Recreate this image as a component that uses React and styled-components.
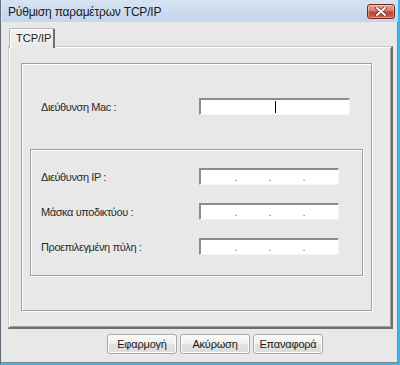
import styled, { createGlobalStyle } from 'styled-components'

const GlobalStyle = createGlobalStyle`
	html, body {
		margin: 0;
		padding: 0;
		background: #fff;
	}
	body {
		font-family: "Liberation Sans", Arial, sans-serif;
		font-size: 11px;
		color: #000;
	}
`

const Window = styled.div`
	box-sizing: border-box;
	width: 400px;
	height: 365px;
	display: flex;
	flex-direction: column;
	border-left: 1px solid #5f6b78;
	border-right: 2px solid #3cb4ee;
	border-bottom: 2px solid #3cb4ee;
	background: #c9d9ec;
`

const TitleBar = styled.div`
	height: 22px;
	flex: none;
	display: flex;
	align-items: center;
	justify-content: space-between;
	padding: 0 3px 0 6px;
	background: linear-gradient(#d6e3f2, #c3d5ea);
	border-left: 1px solid #e4edf7;
`

const Title = styled.span`
	font-size: 12px;
	letter-spacing: -0.2px;
	color: #1a1a1a;
	padding-top: 1px;
`

const CloseButton = styled.div`
	box-sizing: border-box;
	width: 28px;
	height: 15px;
	margin-top: 1px;
	display: flex;
	align-items: center;
	justify-content: center;
	border: 1px solid #6e2a24;
	border-radius: 3px;
	background: linear-gradient(#e8a496 0%, #d7796a 45%, #c2432f 55%, #d0634a 100%);
	box-shadow: inset 0 0 0 1px rgba(255, 255, 255, 0.35);
`

const Client = styled.div`
	flex: 1;
	display: flex;
	flex-direction: column;
	background: #e8e8e8;
	border-right: 1px solid #7d8894;
	border-bottom: 1px solid #7d8894;
	padding: 6px 0 0 7px;
`

const TabStrip = styled.div`
	display: flex;
	height: 18px;
	position: relative;
	z-index: 1;
`

const Tab = styled.div`
	box-sizing: border-box;
	width: 46px;
	height: 20px;
	margin-left: 1px;
	padding: 3px 0 0 6px;
	background: linear-gradient(#f4f4f4, #e8e8e8);
	border: 1px solid #b4b4b4;
	border-bottom: none;
	border-right: 2px solid #6e6e6e;
	border-radius: 2px 2px 0 0;
	box-shadow: inset 1px 1px 0 #fff;
	font-size: 11px;
	color: #1e1e1e;
`

const TabPanel = styled.div`
	box-sizing: border-box;
	width: 385px;
	height: 283px;
	padding: 16px 0 0 12px;
	border-style: solid;
	border-width: 1px 2px 2px 1px;
	border-color: #c8c8c8 #6e6e6e #6e6e6e #c8c8c8;
	box-shadow: inset 1px 1px 0 #fff, inset -1px -1px 0 #a0a0a0;
`

const GroupBox = styled.div`
	box-sizing: border-box;
	width: ${p => p.$w}px;
	height: ${p => p.$h}px;
	margin: ${p => p.$m || 0};
	border: 1px solid #a0a0a0;
	box-shadow: inset 1px 1px 0 #fff, 1px 1px 0 #fff;
	padding-top: ${p => p.$pt || 0}px;
	display: flex;
	flex-direction: column;
	gap: ${p => p.$gap || 0}px;
`

const Row = styled.div`
	display: flex;
	align-items: center;
	height: 17px;
	padding-left: ${p => p.$pl}px;
`

const Label = styled.span`
	width: 158px;
	flex: none;
	color: #2a2a2a;
	letter-spacing: -0.4px;
`

const Field = styled.div`
	box-sizing: border-box;
	width: ${p => p.$w}px;
	height: 17px;
	display: flex;
	align-items: center;
	background: #fff;
	border: 1px solid;
	border-color: #8c8c8c #f4f4f4 #f4f4f4 #8c8c8c;
	box-shadow: inset 1px 1px 0 #8c8c8c;
	padding-left: ${p => p.$pl || 0}px;
`

const Caret = styled.span`
	width: 1px;
	height: 12px;
	background: #000;
	margin-left: 75px;
`

const Segment = styled.span`
	width: 30px;
	flex: none;
`

const Dot = styled.span`
	width: 4px;
	flex: none;
	text-align: center;
	color: #7a6a86;
	font-size: 11px;
	line-height: 11px;
	padding-top: 2px;
`

const ButtonRow = styled.div`
	display: flex;
	gap: 3px;
	margin: 5px 0 0 99px;
`

const Button = styled.div`
	box-sizing: border-box;
	width: 70px;
	height: 20px;
	display: flex;
	align-items: center;
	justify-content: center;
	border: 1px solid #a9a9a9;
	border-radius: 3px;
	background: linear-gradient(#fafafa 0%, #efefef 50%, #e2e2e2 51%, #dcdcdc 100%);
	box-shadow: inset 0 0 0 1px #fbfbfb;
	color: #1a1a1a;
	font-size: 11px;
	letter-spacing: -0.2px;
`

const IpField = () => (
	<Field $w={140} $pl={4}>
		<Segment />
		<Dot>.</Dot>
		<Segment />
		<Dot>.</Dot>
		<Segment />
		<Dot>.</Dot>
	</Field>
)

const ipRows = ['Διεύθυνση IP :', 'Μάσκα υποδικτύου :', 'Προεπιλεγμένη πύλη :']

export default function App() {
	return (
		<>
			<GlobalStyle />
			<Window>
				<TitleBar>
					<Title>Ρύθμιση παραμέτρων TCP/IP</Title>
					<CloseButton>
						<svg width="12" height="9" viewBox="0 0 12 9">
							<path d="M2 1 L10 8 M10 1 L2 8" stroke="#5a2a26" strokeWidth="3.4" strokeLinecap="round" />
							<path d="M2 1 L10 8 M10 1 L2 8" stroke="#fff" strokeWidth="2" strokeLinecap="round" />
						</svg>
					</CloseButton>
				</TitleBar>
				<Client>
					<TabStrip>
						<Tab>TCP/IP</Tab>
					</TabStrip>
					<TabPanel>
						<GroupBox $w={351} $h={248} $pt={34}>
							<Row $pl={19}>
								<Label>Διεύθυνση Mac :</Label>
								<Field $w={151}>
									<Caret />
								</Field>
							</Row>
							<GroupBox $w={333} $h={127} $m="34px 0 0 8px" $pt={18} $gap={18}>
								{ipRows.map(label => (
									<Row key={label} $pl={10}>
										<Label>{label}</Label>
										<IpField />
									</Row>
								))}
							</GroupBox>
						</GroupBox>
					</TabPanel>
					<ButtonRow>
						<Button>Εφαρμογή</Button>
						<Button>Ακύρωση</Button>
						<Button>Επαναφορά</Button>
					</ButtonRow>
				</Client>
			</Window>
		</>
	)
}
